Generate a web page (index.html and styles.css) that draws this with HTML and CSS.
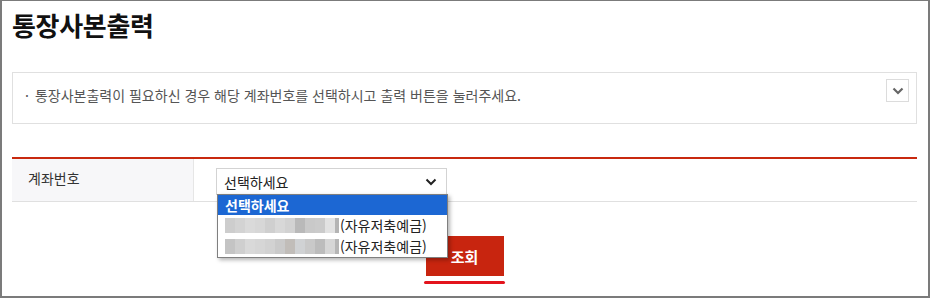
FILE: index.html
```html
<!DOCTYPE html>
<html lang="ko">
<head>
    <meta charset="UTF-8">
    <title>통장사본출력</title>
    <link rel="stylesheet" href="styles.css">
</head>
<body>
    <div class="frame">
        <h1 class="page-title">통장사본출력</h1>

        <div class="notice-box">
            <p class="notice-text"><span class="dot">·</span>통장사본출력이 필요하신 경우 해당 계좌번호를 선택하시고 출력 버튼을 눌러주세요.</p>
            <button class="notice-toggle" type="button">
                <svg width="12" height="8" viewBox="0 0 12 8"><path d="M1.5 1.5 L6 6 L10.5 1.5" fill="none" stroke="#666" stroke-width="2.2"/></svg>
            </button>
        </div>

        <div class="form-table">
            <div class="form-row">
                <div class="form-label">계좌번호</div>
                <div class="form-field">
                    <div class="fake-select">
                        <span>선택하세요</span>
                        <svg width="12" height="8" viewBox="0 0 12 8"><path d="M1.5 1.5 L6 6 L10.5 1.5" fill="none" stroke="#222" stroke-width="2"/></svg>
                    </div>
                    <ul class="select-list">
                        <li class="selected">선택하세요</li>
                        <li>
                            <span class="blur">
                                <i style="background:#cdcdcd"></i><i style="background:#d3d3d3"></i><i style="background:#dadada"></i><i style="background:#d7d7d7"></i><i style="background:#cfcfcf"></i><i style="background:#d8d8d8"></i><i style="background:#d2d2d2"></i><i style="background:#b9b9b9"></i><i style="background:#c9c9c9"></i><i style="background:#cbcbcb"></i><i style="background:#e2e2e2"></i><i class="thin" style="background:#b4b4b4"></i>
                            </span>(자유저축예금)
                        </li>
                        <li>
                            <span class="blur">
                                <i style="background:#c4c4c4"></i><i style="background:#cfcfcf"></i><i style="background:#d9d9d9"></i><i style="background:#d6d6d6"></i><i style="background:#d2d2d2"></i><i style="background:#cacaca"></i><i style="background:#c1bdb9"></i><i style="background:#d0d2d4"></i><i style="background:#c9c9c9"></i><i style="background:#bcbcbc"></i><i style="background:#d6d6d6"></i><i class="thin" style="background:#b6b6b6"></i>
                            </span>(자유저축예금)
                        </li>
                    </ul>
                </div>
            </div>
        </div>

        <div class="btn-area">
            <button class="search-button" type="button">조회</button>
            <span class="focus-line"></span>
        </div>
    </div>
</body>
</html>
```

FILE: styles.css
```css
* {
    margin: 0;
    padding: 0;
    box-sizing: border-box;
    font-family: "Noto Sans CJK KR", "Noto Sans", sans-serif;
}

body {
    background: #ffffff;
}

.frame {
    width: 930px;
    height: 298px;
    border: 2px solid #7b7b7b;
    border-top-width: 1px;
    padding: 0 11px 0 10px;
    overflow: hidden;
}

/* Titel */
.page-title {
    font-size: 26px;
    font-weight: 700;
    line-height: 34px;
    color: #111;
    margin-top: 7px;
    letter-spacing: -0.3px;
}

/* Hinweis */
.notice-box {
    display: flex;
    align-items: flex-start;
    height: 52px;
    margin-top: 30px;
    border: 1px solid #e0e0e0;
    padding: 6px 7px 0 12px;
}

.notice-text {
    flex: 1;
    font-size: 14px;
    line-height: 22px;
    color: #555;
    padding-top: 5px;
}

.notice-text .dot {
    margin-right: 6px;
}

.notice-toggle {
    width: 23px;
    height: 23px;
    border: 1px solid #dcdcdc;
    background: #fff;
    display: flex;
    align-items: center;
    justify-content: center;
}

/* Tabelle */
.form-table {
    margin-top: 33px;
    border-top: 2px solid #c8290f;
}

.form-row {
    display: flex;
    height: 43px;
    border-bottom: 1px solid #e0e0e0;
}

.form-label {
    width: 182px;
    background: #f7f7f9;
    border-right: 1px solid #e6e6e6;
    font-size: 14px;
    color: #333;
    padding: 9px 0 0 16px;
}

.form-field {
    position: relative;
    padding: 9px 0 0 22px;
}

.fake-select {
    width: 231px;
    height: 27px;
    border: 1px solid #d3d3d3;
    border-bottom: none;
    display: flex;
    align-items: center;
    justify-content: space-between;
    padding: 0 9px 0 7px;
    font-size: 14px;
    color: #222;
}

.select-list {
    position: absolute;
    top: 35px;
    left: 23px;
    width: 231px;
    list-style: none;
    background: #fff;
    border: 1px solid #7f7f7f;
    box-shadow: 2px 2px 4px rgba(0, 0, 0, 0.3);
    z-index: 10;
}

.select-list li {
    height: 21px;
    line-height: 21px;
    font-size: 14px;
    color: #222;
    padding-left: 7px;
    display: flex;
    align-items: center;
}

.select-list li.selected {
    background: #1c67d3;
    color: #fff;
    font-weight: 700;
    height: 20px;
}

.blur {
    display: inline-flex;
    height: 15px;
    margin-right: 1px;
}

.blur i {
    display: block;
    width: 10px;
    height: 15px;
}

.blur i.thin {
    width: 4px;
}

/* Button */
.btn-area {
    display: flex;
    flex-direction: column;
    align-items: center;
    margin-top: 34px;
}

.search-button {
    width: 78px;
    height: 40px;
    background: #c8250f;
    border: none;
    color: #fff;
    font-size: 15px;
    font-weight: 700;
}

.focus-line {
    display: block;
    width: 81px;
    height: 3px;
    margin-top: 5px;
    background: #e3141d;
    border-radius: 2px;
}
```
